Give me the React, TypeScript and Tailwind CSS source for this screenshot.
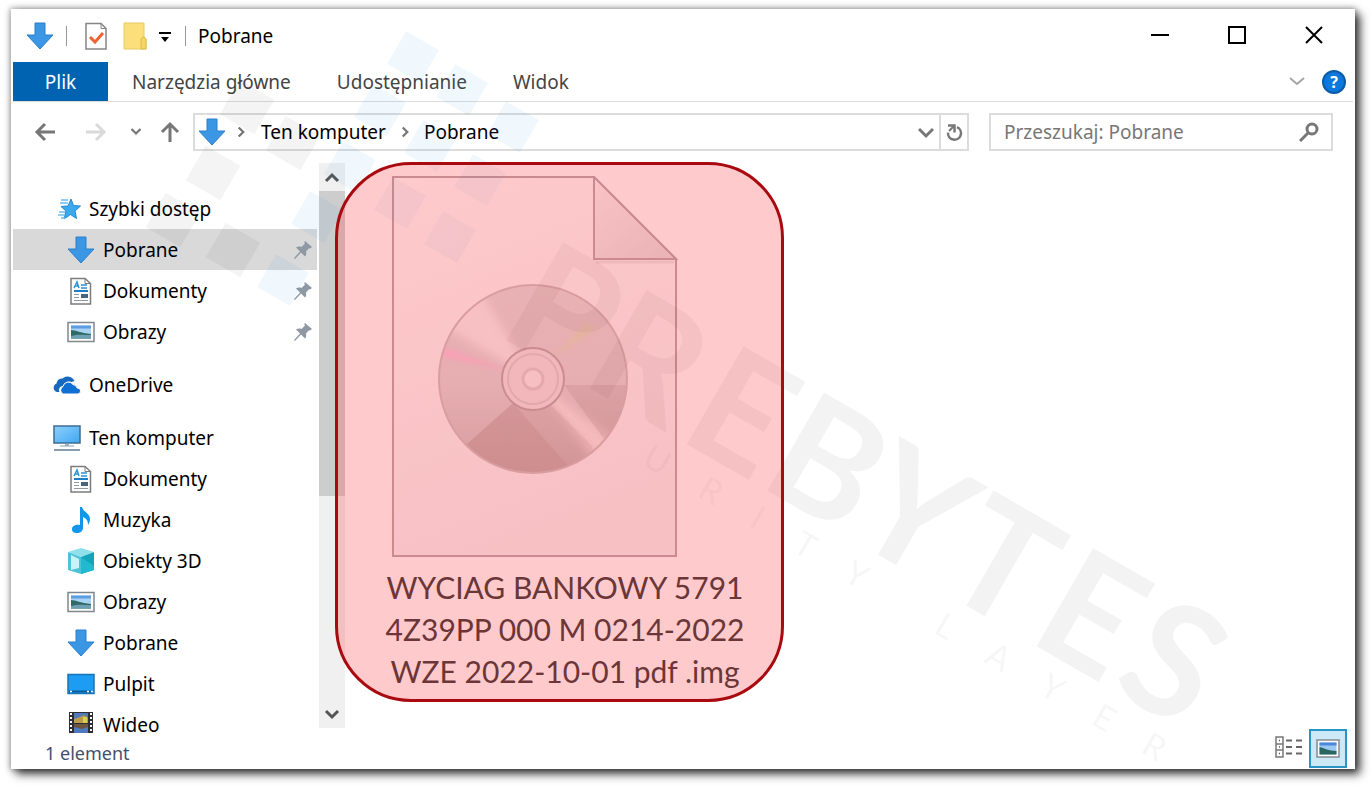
import { ReactNode } from 'react';

const DownArrow = () => (
  <svg viewBox="0 0 28 28" className="h-7 w-7">
    <path d="M9 1h10v12h8L14 27 1 13h8z" fill="#3b96e4" stroke="#2b7fcb" />
  </svg>
);

const StarIcon = () => (
  <svg viewBox="0 0 28 28" className="h-7 w-7">
    <path
      d="M18 4l2.500 6.500 7 .5-5.500 5 1.500 7.500-6-4-6.500 4.500 2-8-5-4.500 7-.5z"
      fill="#3aa9ee"
      stroke="#1f8ad2"
    />
    <path d="M8 5h7M7 8h8M6 17h6M5 20h7M8 23h4" stroke="#6fbff0" strokeWidth="1.500" />
  </svg>
);

const DocumentIcon = () => (
  <svg viewBox="0 0 28 28" className="h-7 w-7">
    <path d="M4 1.500H18L23.500 6.500V27H4z" fill="#fff" stroke="#7c7c7c" strokeWidth="1.500" />
    <path d="M18 1.500V6.500H23.500" fill="none" stroke="#7c7c7c" />
    <path d="M7 11l3-6 2 6M8 9h4M14 8h6M14 11h6" fill="none" stroke="#2d93d6" strokeWidth="1.500" />
    <path d="M7 14h14" stroke="#1c7fc6" strokeWidth="2" />
    <path d="M7 17.500h5M7 20.500h5M7 23.500h14" stroke="#8e9aa4" strokeWidth="1.200" />
    <path d="M14 17h7v4h-7z" fill="#47657d" />
  </svg>
);

const PictureIcon = () => (
  <svg viewBox="0 0 28 28" className="h-7 w-7">
    <path d="M1 4.500h26v19H1z" fill="#fff" stroke="#7f868c" strokeWidth="1.500" />
    <path d="M4 7.500h20v13H4z" fill="#a9d2f4" />
    <path d="M4 7.500h20v3H4z" fill="#5d9de2" />
    <path d="M4 12c5 0 9 3 20 4v4.500H4z" fill="#2f6b66" />
    <path d="M4 18c7-2 12-1 20-1v3.500H4z" fill="#6f9fb2" />
  </svg>
);

const OneDriveIcon = () => (
  <svg viewBox="0 0 28 28" className="h-7 w-7">
    <path
      d="M4 21a4.500 4.500 0 0 1-.5-8.500 6 6 0 0 1 6-5A7.500 7.500 0 0 1 21.500 10l-3 1a6 6 0 0 0-8 4 4 4 0 0 0-4 6z"
      fill="#1769c0"
    />
    <path
      d="M10.500 23a4 4 0 0 1-.5-7.500 5.500 5.500 0 0 1 10-2 4.500 4.500 0 0 1 4 3.500 3 3 0 0 1 1 6z"
      fill="#0f6fd2"
      stroke="#fff"
    />
  </svg>
);

const ComputerIcon = () => (
  <svg viewBox="0 0 28 28" className="h-7 w-7">
    <defs>
      <linearGradient id="screen" x1="0" y1="0" x2="1" y2="1">
        <stop offset="0" stopColor="#8fd0fc" />
        <stop offset="1" stopColor="#3fa7f2" />
      </linearGradient>
    </defs>
    <path d="M1 2h26v17H1z" fill="url(#screen)" stroke="#3c6e94" strokeWidth="1.500" />
    <path d="M12 20h4v2h-4z" fill="#9fb6c6" />
    <path d="M7 22h14" stroke="#8ca0b0" />
    <path d="M1 26h26" stroke="#8a9dac" strokeWidth="2" />
  </svg>
);

const MusicIcon = () => (
  <svg viewBox="0 0 28 28" className="h-7 w-7">
    <path
      d="M13 1h2c1 5 8 6 8 12 0 3-1 4-2 6 0-4-1-6-5-8v11c0 3-3 5-6 5s-5-1-5-4 4-5 8-4z"
      fill="#1296ec"
    />
  </svg>
);

const CubeIcon = () => (
  <svg viewBox="0 0 28 28" className="h-7 w-7">
    <path d="M14 1l13 4-13 5L1 5z" fill="#8fe0ea" />
    <path d="M1 5l13 5v17L1 23z" fill="#4cc4d6" />
    <path d="M27 5l-13 5v17l13-4z" fill="#12a3bd" />
    <path d="M4 8l8 4v9l-8 2z" fill="#c9f3f6" />
    <path d="M14 10l13 9v4l-13 4z" fill="#22b8d0" />
  </svg>
);

const DesktopIcon = () => (
  <svg viewBox="0 0 28 28" className="h-7 w-7">
    <path d="M1 4.500h26v19H1z" fill="#1d9cf4" stroke="#1874b5" strokeWidth="1.500" />
    <path d="M2 21.500h24" stroke="#0d5d9b" strokeWidth="2" />
    <path d="M3 21.500h2M20 21.500h2M24 21.500h2" stroke="#fff" strokeWidth="1.500" />
  </svg>
);

// Bottom of the strip is cut where the list runs out of room
const VideoIcon = () => (
  <span className="mb-[5px] h-[22px] w-7 overflow-hidden">
    <svg viewBox="0 0 28 28" className="h-7 w-7">
      <path d="M2 1h24v26H2z" fill="#2d2d33" />
      <path d="M4 2v25M24 2v25" stroke="#fff" strokeWidth="2" strokeDasharray="2 2" />
      <path d="M7 2h14v10H7z" fill="#5279b8" />
      <path d="M7 8l6-2 4-2 4 3v5H7z" fill="#b99b4a" />
      <path d="M16 6h4v6h-4z" fill="#d6d04a" />
      <path d="M7 13h14v9H7z" fill="#4c79bf" />
      <path d="M7 13h14v3l-6 2-8-2z" fill="#6b5540" />
    </svg>
  </span>
);

const PinIcon = () => (
  <svg viewBox="0 0 20 20" className="h-5 w-5">
    <path
      d="M12 1l7 6-2 1.500-1-.3-3 3.300c.7 2.500 0 4-1 5L8 12.500 2.500 18.500 1 19l.5-1.500L7 11.500 3 7.500c1.500-1 3.500-1.200 5.500-.5l3.500-3.500-.8-1z"
      fill="#8e99a3"
    />
  </svg>
);

interface NavItemProps {
  icon: ReactNode;
  label: string;
  child?: boolean;
  pinned?: boolean;
  active?: boolean;
}

const NavItem = ({ icon, label, child, pinned, active }: NavItemProps) => (
  <li>
    <a
      href="#"
      aria-current={active ? 'page' : undefined}
      className={`flex h-[41px] items-center gap-2 pr-1 ${child ? 'pl-[54px]' : 'pl-[40px]'} ${
        active ? 'bg-[#d9d9d9]' : ''
      }`}
    >
      {icon}
      <span className="flex-1 whitespace-nowrap">{label}</span>
      {pinned && <PinIcon />}
    </a>
  </li>
);

const Chevron = ({ d, className }: { d: string; className: string }) => (
  <svg viewBox="0 0 16 16" className={className}>
    <path d={d} fill="none" stroke="currentColor" strokeWidth="3" />
  </svg>
);

const NavPane = () => (
  <div className="mt-3 mb-[5px] flex w-[334px] shrink-0">
    <nav className="w-[306px] shrink-0 pl-[2px] pt-[25px]" aria-label="Foldery">
      <ul>
        <NavItem icon={<StarIcon />} label="Szybki dostęp" />
        <NavItem icon={<DownArrow />} label="Pobrane" child pinned active />
        <NavItem icon={<DocumentIcon />} label="Dokumenty" child pinned />
        <NavItem icon={<PictureIcon />} label="Obrazy" child pinned />
      </ul>
      <ul className="mt-3">
        <NavItem icon={<OneDriveIcon />} label="OneDrive" />
      </ul>
      <ul className="mt-3">
        <NavItem icon={<ComputerIcon />} label="Ten komputer" />
        <NavItem icon={<DocumentIcon />} label="Dokumenty" child />
        <NavItem icon={<MusicIcon />} label="Muzyka" child />
        <NavItem icon={<CubeIcon />} label="Obiekty 3D" child />
        <NavItem icon={<PictureIcon />} label="Obrazy" child />
        <NavItem icon={<DownArrow />} label="Pobrane" child />
        <NavItem icon={<DesktopIcon />} label="Pulpit" child />
        <NavItem icon={<VideoIcon />} label="Wideo" child />
      </ul>
    </nav>
    <div className="ml-[2px] flex w-[26px] flex-col bg-[#f0f0f0] text-[#555]">
      <button aria-label="W górę" className="flex h-[28px] items-center justify-center">
        <Chevron d="M2 12l6-6 6 6" className="h-4 w-4" />
      </button>
      <div className="min-h-0 flex-1">
        <div className="h-[60%] bg-[#cdcdcd]" />
      </div>
      <button aria-label="W dół" className="flex h-[28px] items-center justify-center">
        <Chevron d="M2 5l6 6 6-6" className="h-4 w-4" />
      </button>
    </div>
  </div>
);

const DiscFile = () => (
  <svg viewBox="0 0 286 382" className="h-[382px] w-[286px]">
    <defs>
      <linearGradient id="page" x1="0" y1="0" x2="0.3" y2="1">
        <stop offset="0" stopColor="#ffffff" />
        <stop offset="1" stopColor="#f4f2f4" />
      </linearGradient>
      <linearGradient id="fold" x1="0" y1="0" x2="0.8" y2="1">
        <stop offset="0" stopColor="#f8f6f7" />
        <stop offset="1" stopColor="#e2e0e1" />
      </linearGradient>
      <clipPath id="disc">
        <circle cx="141" cy="203" r="94" />
      </clipPath>
      <linearGradient id="shade" x1="0" y1="0" x2="0" y2="1">
        <stop offset="0" stopColor="#dfdcdb" />
        <stop offset="0.5" stopColor="#dcd7d8" />
        <stop offset="1" stopColor="#bfb5b5" />
      </linearGradient>
      <filter id="soft">
        <feGaussianBlur stdDeviation="5" />
      </filter>
      <filter id="softer">
        <feGaussianBlur stdDeviation="2" />
      </filter>
    </defs>
    <path d="M1 1h201l82 82v297H1z" fill="url(#page)" stroke="#b3a4a6" strokeWidth="2" />
    <path d="M202 1v82h82z" fill="url(#fold)" stroke="#b3a4a6" strokeWidth="2" />
    <path d="M204 86h78" stroke="#e9e5e6" strokeWidth="3" />
    <g clipPath="url(#disc)">
      <path d="M40 100h200v220H40z" fill="url(#shade)" />
      <g filter="url(#soft)">
        <path d="M141 203L52 150 85 110z" fill="#f4f1f1" />
        <path d="M141 203L255 285 225 315z" fill="#f0e6e6" />
      </g>
      <path d="M121 227L75 268 100 300h85z" fill="#a99292" opacity="0.300" />
      <path d="M121 227L75 268 100 300h110l-10-30-40-40z" fill="#a99292" opacity="0.200" />
      <path d="M172 209h66c0 20-10 42-26 54z" fill="#ad9b9b" opacity="0.300" />
      <path d="M120 196L46 168v12z" fill="#fdbfe4" opacity="0.700" filter="url(#softer)" />
      <path d="M160 182L194 146l10 8z" fill="#d9e2b4" opacity="0.600" filter="url(#softer)" />
      <path d="M162 224l56 54" stroke="#f6eeee" strokeWidth="5" opacity="0.500" filter="url(#softer)" />
    </g>
    <circle cx="141" cy="203" r="94" fill="none" stroke="#c9bfbf" strokeWidth="2" />
    <circle cx="141" cy="203" r="31" fill="#ebe4e6" stroke="#b5a6a8" strokeWidth="2" />
    <circle cx="141" cy="203" r="25" fill="none" stroke="#d9cfd1" strokeWidth="2" />
    <circle cx="141" cy="203" r="10" fill="#f5f0f1" stroke="#dad0d2" strokeWidth="3" />
  </svg>
);

const GRAY_TILES = [[247, 107], [293, 143], [213, 173], [173, 220], [233, 250]];
const BLUE_TILES = [
  [413, 57], [462, 90], [380, 110], [513, 127], [430, 146], [350, 167],
  [480, 180], [400, 203], [450, 237], [317, 217], [283, 280],
];
const BRAND: [string, number][] = [
  ['P', 0], ['R', 96], ['E', 208], ['B', 301], ['Y', 401], ['T', 507], ['E', 612], ['S', 708],
];
const TAGLINE: [string, number][] = [
  ['U', 191], ['R', 253], ['I', 307], ['T', 362], ['Y', 421],
  ['L', 524], ['A', 585], ['Y', 647], ['E', 707], ['R', 765],
];

// Faint logo laid diagonally over the whole window
const Watermark = () => (
  <svg
    viewBox="11 9 1344 760"
    className="pointer-events-none absolute inset-0 h-full w-full"
    fontFamily="Lato, sans-serif"
    aria-hidden="true"
  >
    {GRAY_TILES.map(([x, y]) => (
      <rect key={`${x}-${y}`} x={x - 20} y={y - 20} width="40" height="40" fill="#000" opacity="0.045" transform={`rotate(30 ${x} ${y})`} />
    ))}
    {BLUE_TILES.map(([x, y]) => (
      <rect key={`${x}-${y}`} x={x - 19} y={y - 19} width="38" height="38" fill="#2f97e0" opacity="0.065" transform={`rotate(30 ${x} ${y})`} />
    ))}
    <g transform="translate(506 340) rotate(30)" fill="#000">
      <g fontSize="157" fontWeight="700" opacity="0.045">
        {BRAND.map(([char, x]) => (
          <text key={x} x={x - 12} y="0">{char}</text>
        ))}
      </g>
      <g fontSize="34" textAnchor="middle" opacity="0.030">
        {TAGLINE.map(([char, x]) => (
          <text key={x} x={x} y="40">{char}</text>
        ))}
      </g>
    </g>
  </svg>
);

const TitleBar = () => (
  <header className="flex h-[53px] items-center pl-[15px]">
    <DownArrow />
    <span className="ml-3 h-5 w-px bg-[#999]" />
    <button aria-label="Właściwości" className="ml-[17px]">
      <svg viewBox="0 0 24 28" className="h-7 w-6">
        <path d="M2 1.500h15l5 5V27H2z" fill="#fff" stroke="#858585" strokeWidth="1.500" />
        <path d="M17 1.500v5h5" fill="none" stroke="#858585" />
        <path d="M6 15l5 5 8-9" fill="none" stroke="#ee6236" strokeWidth="3" />
      </svg>
    </button>
    <button aria-label="Nowy folder" className="ml-[15px]">
      <svg viewBox="0 0 24 28" className="h-7 w-6">
        <path d="M1 1h20v14l2 2v10H1z" fill="#fbdf7b" stroke="#e9c95f" />
        <path d="M18 27V17l2-2h1l2 2v10z" fill="#f7d564" stroke="#dcb94e" />
      </svg>
    </button>
    <button aria-label="Dostosuj pasek" className="ml-[11px]">
      <svg viewBox="0 0 14 14" className="h-[14px] w-[14px]">
        <path d="M1 4h12" stroke="#000" strokeWidth="2" />
        <path d="M3 8h8l-4 5z" fill="#000" />
      </svg>
    </button>
    <span className="ml-[13px] h-5 w-px bg-[#999]" />
    <h1 className="ml-3 flex-1">Pobrane</h1>
    <div className="mb-[2px] flex pr-[3px]">
      <button aria-label="Minimalizuj" className="flex w-[77px] justify-center">
        <svg viewBox="0 0 18 18" className="h-[18px] w-[18px]">
          <path d="M0 9h18" stroke="#000" strokeWidth="2" />
        </svg>
      </button>
      <button aria-label="Maksymalizuj" className="flex w-[77px] justify-center">
        <svg viewBox="0 0 18 18" className="h-[18px] w-[18px]">
          <path d="M1 1h16v16H1z" fill="none" stroke="#000" strokeWidth="2" />
        </svg>
      </button>
      <button aria-label="Zamknij" className="flex w-[77px] justify-center">
        <svg viewBox="0 0 18 18" className="h-[18px] w-[18px]">
          <path d="M1 1l16 16M17 1L1 17" stroke="#000" strokeWidth="2" />
        </svg>
      </button>
    </div>
  </header>
);

const Ribbon = () => (
  <div className="mx-[2px] flex h-10 items-center border-b border-[#dcdcdc] text-[#444]">
    <button className="h-full w-[95px] bg-[#0063b1] text-white">Plik</button>
    <button className="pl-6 pr-[22px]">Narzędzia główne</button>
    <button className="px-6">Udostępnianie</button>
    <button className="px-[22px]">Widok</button>
    <button aria-label="Rozwiń wstążkę" className="ml-auto text-[#a5a5a5]">
      <svg viewBox="0 0 16 16" className="h-4 w-4">
        <path d="M1 4l7 6 7-6" fill="none" stroke="currentColor" strokeWidth="2" />
      </svg>
    </button>
    <button
      aria-label="Pomoc"
      className="ml-[17px] mr-[7px] h-6 w-6 rounded-full border-2 border-[#0a5ca8] bg-[#0a78dc] text-base leading-5 font-bold text-white"
    >
      ?
    </button>
  </div>
);

const AddressRow = () => (
  <div className="flex items-center pt-[11px] pr-[22px] pl-[23px] text-[#777]">
    <button aria-label="Wstecz">
      <svg viewBox="0 0 22 20" className="h-5 w-[22px]">
        <path d="M21 10H3M11 2l-8 8 8 8" fill="none" stroke="#777" strokeWidth="3" />
      </svg>
    </button>
    <button aria-label="Dalej" className="ml-[29px]">
      <svg viewBox="0 0 22 20" className="h-5 w-[22px]">
        <path d="M1 10h18M11 2l8 8-8 8" fill="none" stroke="#dadada" strokeWidth="3" />
      </svg>
    </button>
    <button aria-label="Ostatnie lokalizacje" className="ml-[23px]">
      <Chevron d="M2 4l6 6 6-6" className="h-3 w-3" />
    </button>
    <button aria-label="W górę" className="ml-[18px]">
      <svg viewBox="0 0 20 22" className="h-[22px] w-5">
        <path d="M10 21V3M2 11l8-8 8 8" fill="none" stroke="#777" strokeWidth="3" />
      </svg>
    </button>
    <div className="ml-[13px] flex h-[38px] flex-1 items-center border-2 border-[#dcdcdc] pl-[3px] text-black">
      <DownArrow />
      <Chevron d="M5 2l6 6-6 6" className="ml-[9px] h-3 w-3 text-[#777]" />
      <a href="#" className="ml-[14px]">Ten komputer</a>
      <Chevron d="M5 2l6 6-6 6" className="ml-[13px] h-3 w-3 text-[#777]" />
      <a href="#" className="ml-[13px]">Pobrane</a>
      <button aria-label="Poprzednie lokalizacje" className="ml-auto mr-[5px] text-[#777]">
        <Chevron d="M1 5l7 7 7-7" className="h-4 w-4" />
      </button>
      <button
        aria-label="Odśwież"
        className="flex h-full w-[28px] items-center justify-center border-l-2 border-[#dcdcdc]"
      >
        <svg viewBox="0 0 20 20" className="h-5 w-5">
          <path d="M13 5.200a6.500 6.500 0 1 1-9 5.500" fill="none" stroke="#777" strokeWidth="2.500" />
          <path d="M4 3.500h6.500v7" fill="none" stroke="#777" strokeWidth="2.500" />
          <path d="M10 4l-5 5" stroke="#777" strokeWidth="2" />
        </svg>
      </button>
    </div>
    <label className="ml-5 flex h-[38px] w-[344px] items-center border-2 border-[#dcdcdc] pr-3 pl-[13px]">
      <input
        type="text"
        aria-label="Przeszukaj"
        placeholder="Przeszukaj: Pobrane"
        className="min-w-0 flex-1 outline-none placeholder:text-[#777]"
      />
      <svg viewBox="0 0 20 20" className="h-5 w-5">
        <circle cx="13" cy="7" r="5" fill="none" stroke="#777" strokeWidth="3" />
        <path d="M9 11l-8 8" stroke="#777" strokeWidth="3" />
      </svg>
    </label>
  </div>
);

const StatusBar = () => (
  <footer className="flex h-9 items-center pr-[8px] pl-[34px]">
    <span className="flex-1 pt-1 text-[18px] text-[#44506b]">1 element</span>
    <button aria-label="Szczegóły" className="-mt-2 mr-[6px]">
      <svg viewBox="0 0 28 22" className="h-[22px] w-7">
        <path d="M1 1h7v20H1zM1 8h7M1 14h7" fill="none" stroke="#777" strokeWidth="1.500" />
        <path d="M4 4.500h1M4 11h1M4 17.500h1" stroke="#555" strokeWidth="1.500" />
        <path d="M11 4.500h6M21 4.500h6M11 11h6M21 11h6M11 17.500h6M21 17.500h6" stroke="#666" strokeWidth="2" />
      </svg>
    </button>
    <button
      aria-label="Duże ikony"
      aria-pressed="true"
      className="-mt-[5px] flex h-[39px] w-[38px] items-center justify-center border-2 border-[#2a94c6] bg-[#cde8f6]"
    >
      <svg viewBox="0 0 24 19" className="h-[19px] w-6">
        <path d="M1 1h22v17H1z" fill="#fff" stroke="#858b90" strokeWidth="1.500" />
        <path d="M3.500 3.500h17v12h-17z" fill="#9cc9f2" />
        <path d="M3.500 3.500h17v3h-17z" fill="#4d86da" />
        <path d="M3.500 8c5 1 9 4 17 4v3.500h-17z" fill="#2c6660" />
      </svg>
    </button>
  </footer>
);

const App: React.FC = () => {
  return (
    <div className="flex h-screen bg-white pt-[9px] pr-[17px] pb-5 pl-[11px] font-['Noto_Sans','Open_Sans',sans-serif] text-[19px] leading-6 text-black">
      <div className="relative flex min-w-0 flex-1 flex-col bg-white shadow-[5px_5px_9px_0px_rgba(0,0,0,0.75),0_0_6px_1px_rgba(0,0,0,0.35)]">
        <TitleBar />
        <Ribbon />
        <AddressRow />
        <div className="flex min-h-0 flex-1">
          <NavPane />
          <main className="min-w-0 flex-1 pt-[25px]">
            <figure className="ml-[20px] flex w-[400px] flex-col items-center">
              <div className="mr-[60px]">
                <DiscFile />
              </div>
              <figcaption className="mt-[8px] text-center font-[Lato,sans-serif] text-[30px] leading-[42px] text-[#2b2b2b]">
                WYCIAG BANKOWY 5791
                <br />
                4Z39PP 000 M 0214-2022
                <br />
                WZE 2022-10-01 pdf .img
              </figcaption>
            </figure>
          </main>
        </div>
        <StatusBar />
        <Watermark />
        {/* Highlight ring around the suspicious file */}
        <div className="pointer-events-none absolute top-[153px] left-[324px] h-[540px] w-[449px] rounded-[76px] border-3 border-[#a90a10] bg-[#ff5055]/30" />
      </div>
    </div>
  );
};

export default App;
